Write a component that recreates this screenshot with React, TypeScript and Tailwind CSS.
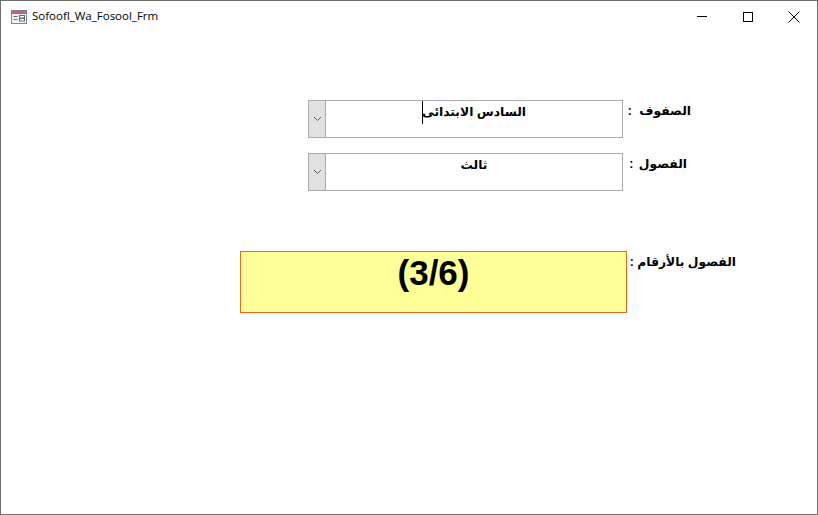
const rowLabel = "font-bold text-[12.3px] leading-[18px] text-black whitespace-nowrap text-right"

function FormIcon() {
  return (
    <svg width="16" height="16" viewBox="0 0 16 16" className="shrink-0">
      <rect x="0.5" y="1.5" width="15" height="13" fill="#f0f3f9" stroke="#7f8591" />
      <rect x="1" y="2" width="14" height="3" fill="#d8557f" />
      <rect x="2.5" y="7" width="4" height="1" fill="#5f6b7d" />
      <rect x="2.5" y="10" width="4" height="1" fill="#5f6b7d" />
      <rect x="8.5" y="6.5" width="5" height="2.5" fill="#fff" stroke="#5f6b7d" strokeWidth="1" />
      <rect x="8.5" y="9.5" width="5" height="2.5" fill="#fff" stroke="#5f6b7d" strokeWidth="1" />
    </svg>
  )
}

function Combo({ value, caret }: { value: string; caret?: boolean }) {
  return (
    <div className="w-[315px] h-[38px] flex border border-[#ababab] bg-white">
      <div className="w-[17px] shrink-0 bg-[#e1e1e1] border-r border-[#ababab] flex items-center justify-center">
        <svg width="9" height="6" viewBox="0 0 9 6">
          <path d="M1 1 L4.5 4.5 L8 1" fill="none" stroke="#5a5a5a" strokeWidth="1" />
        </svg>
      </div>
      <div dir="rtl" className="relative flex-1 text-center font-bold text-[12.3px] leading-[18px] pt-[2px] text-black">
        {value}
        {caret && <span className="absolute left-[96px] top-[0px] w-px h-[23px] bg-black" />}
      </div>
    </div>
  )
}

export default function App() {
  return (
    <div
      className="w-[818px] h-[515px] bg-white border border-[#6e6e6e] flex flex-col overflow-hidden"
      style={{ fontFamily: '"Liberation Sans", "DejaVu Sans", Arial, sans-serif' }}
    >
      <div className="h-[31px] flex items-center shrink-0">
        <div className="ml-[10px] flex items-center gap-[5px]">
          <FormIcon />
          <span className="text-[11.5px] leading-[16px] pb-px text-black" style={{ fontFamily: '"Open Sans", "Liberation Sans", sans-serif' }}>
            Sofoofl_Wa_Fosool_Frm
          </span>
        </div>
        <div className="ml-auto flex items-center">
          <div className="w-[46px] h-[31px] flex items-center justify-center">
            <div className="w-[10px] h-px bg-black" />
          </div>
          <div className="w-[46px] h-[31px] flex items-center justify-center">
            <div className="w-[10px] h-[10px] border border-black" />
          </div>
          <div className="w-[46px] h-[31px] flex items-center justify-center pr-px">
            <svg width="12" height="12" viewBox="0 0 12 12">
              <path d="M0.5 0.5 L11.5 11.5 M11.5 0.5 L0.5 11.5" stroke="#000" strokeWidth="1" />
            </svg>
          </div>
        </div>
      </div>

      <div className="flex flex-col pt-[68px]">
        <div className="flex ml-[307px] h-[38px]">
          <Combo value="السادس الابتدائى" caret />
          <div dir="rtl" className={`${rowLabel} ml-[5px] w-[63px] pt-[2px] [word-spacing:4px]`}>الصفوف :</div>
        </div>
        <div className="flex ml-[307px] h-[38px] mt-[15px]">
          <Combo value="ثالث" />
          <div dir="rtl" className={`${rowLabel} ml-[5px] w-[59px] pt-[2px] [word-spacing:2px]`}>الفصول :</div>
        </div>
        <div className="flex ml-[239px] mt-[60px]">
          <div className="w-[387px] h-[62px] bg-[#ffff99] border border-[#ed6c10] text-center font-bold text-[35px] leading-[40px] pt-[1px] text-black">
            (3/6)
          </div>
          <div dir="rtl" className={`${rowLabel} ml-[3px] w-[106px] pt-[2px]`}>الفصول بالأرقام :</div>
        </div>
      </div>
    </div>
  )
}
